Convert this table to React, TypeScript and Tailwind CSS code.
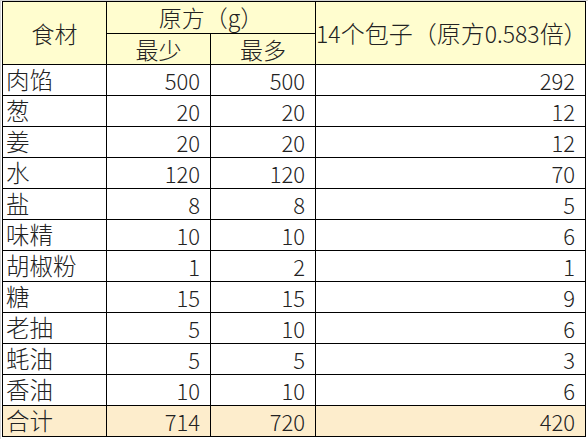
import React from 'react';

type Row = { name: string; min: number; max: number; scaled: number };

const rows: Row[] = [
  { name: '肉馅', min: 500, max: 500, scaled: 292 },
  { name: '葱', min: 20, max: 20, scaled: 12 },
  { name: '姜', min: 20, max: 20, scaled: 12 },
  { name: '水', min: 120, max: 120, scaled: 70 },
  { name: '盐', min: 8, max: 8, scaled: 5 },
  { name: '味精', min: 10, max: 10, scaled: 6 },
  { name: '胡椒粉', min: 1, max: 2, scaled: 1 },
  { name: '糖', min: 15, max: 15, scaled: 9 },
  { name: '老抽', min: 5, max: 10, scaled: 6 },
  { name: '蚝油', min: 5, max: 5, scaled: 3 },
  { name: '香油', min: 10, max: 10, scaled: 6 },
];

const cell = 'border border-black p-0 leading-none font-light';
const num = `${cell} text-right pr-[10px] text-[22px]`;
const label = `${cell} pl-[3px] text-[23.5px]`;
const head = `${cell} text-center text-[23px] font-light`;

export default function App() {
  return (
    <div
      className="w-[588px] h-[439px] bg-white overflow-hidden border-t border-l border-[#d4d4d4] text-[#222]"
      style={{ fontFamily: '"Noto Sans CJK SC", "Noto Sans", sans-serif' }}
    >
      <table className="border-collapse table-fixed ml-[1px] w-[583px]">
        <colgroup>
          <col className="w-[104px]" />
          <col className="w-[104px]" />
          <col className="w-[105px]" />
          <col className="w-[270px]" />
        </colgroup>
        <thead>
          <tr className="h-[32px] bg-[#fffdcf]">
            <th rowSpan={2} className={head}>
              食材
            </th>
            <th colSpan={2} className={head}>
              原方（g）
            </th>
            <th
              rowSpan={2}
              className={`${cell} text-left whitespace-nowrap text-[24px] font-light`}
            >
              <span className="text-[23px]">14</span>个包子（原方<span className="text-[23px]">0.583</span>倍）
            </th>
          </tr>
          <tr className="h-[31px] bg-[#fffdcf]">
            <th className={head}>最少</th>
            <th className={head}>最多</th>
          </tr>
        </thead>
        <tbody>
          {rows.map((r) => (
            <tr key={r.name} className="h-[31px]">
              <td className={label}>{r.name}</td>
              <td className={num}>{r.min}</td>
              <td className={num}>{r.max}</td>
              <td className={num}>{r.scaled}</td>
            </tr>
          ))}
          <tr className="h-[31px] bg-[#fdedcc]">
            <td className={label}>合计</td>
            <td className={num}>714</td>
            <td className={num}>720</td>
            <td className={num}>420</td>
          </tr>
        </tbody>
      </table>
    </div>
  );
}
